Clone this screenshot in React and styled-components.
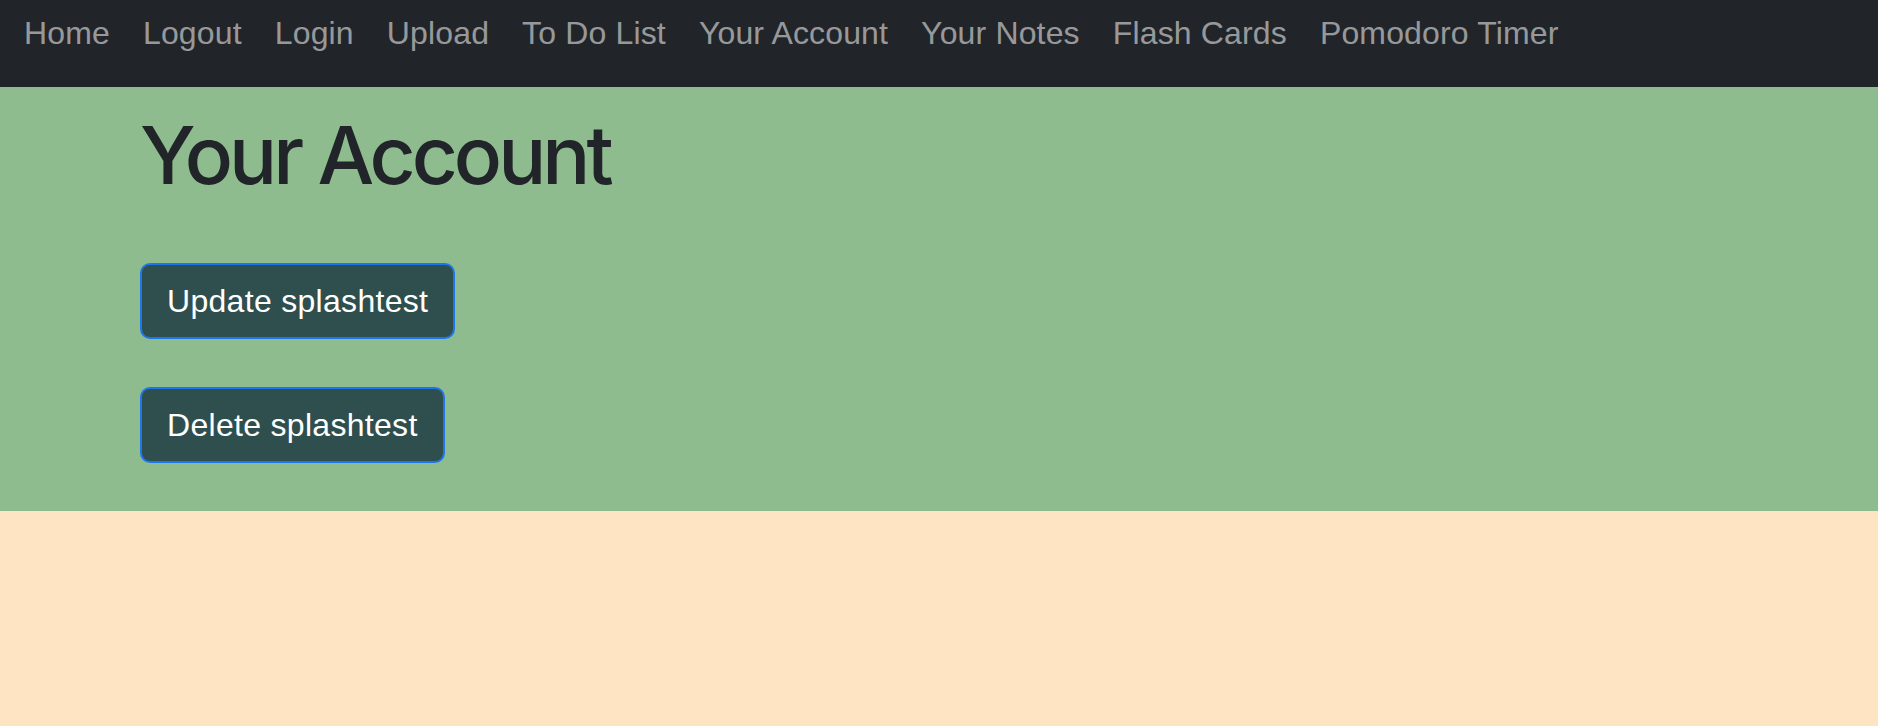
import React from "react";
import styled, { createGlobalStyle } from "styled-components";

const GlobalStyle = createGlobalStyle`
  html, body {
    margin: 0;
    padding: 0;
    background: bisque;
    font-family: "Liberation Sans", Arial, sans-serif;
  }
  * {
    box-sizing: border-box;
  }
`;

const NavBar = styled.nav`
  background: #212529;
  height: 87px;
  display: flex;
  align-items: flex-start;
  padding: 0 0 0 7.5px;
`;

const NavList = styled.ul`
  display: flex;
  list-style: none;
  margin: 0;
  padding: 0;
`;

const NavLink = styled.a`
  display: block;
  padding: 9px 16.5px;
  font-size: 32px;
  line-height: 48px;
  letter-spacing: 0.15px;
  color: rgba(255, 255, 255, 0.55);
  text-decoration: none;
  cursor: pointer;
`;

const Section = styled.section`
  background: darkseagreen;
  padding: 20px 0 48px 140px;
  display: flex;
  flex-direction: column;
  align-items: flex-start;
`;

const Title = styled.h1`
  margin: 0 0 60px;
  font-family: Inter, "Liberation Sans", sans-serif;
  font-size: 80px;
  font-weight: 500;
  line-height: 96px;
  color: #212529;
  letter-spacing: -4px;
`;

const ActionButton = styled.button`
  height: 76px;
  padding: 0 25px;
  margin-top: ${(p) => (p.$first ? "0" : "48px")};
  background: darkslategray;
  color: #fff;
  border: 2px solid #1e76ee;
  border-radius: 10px;
  font-family: inherit;
  font-size: 32px;
  line-height: 48px;
  letter-spacing: 0.3px;
  cursor: pointer;
`;

const links = [
  "Home",
  "Logout",
  "Login",
  "Upload",
  "To Do List",
  "Your Account",
  "Your Notes",
  "Flash Cards",
  "Pomodoro Timer",
];

export default function App() {
  return (
    <>
      <GlobalStyle />
      <NavBar>
        <NavList>
          {links.map((l) => (
            <li key={l}>
              <NavLink>{l}</NavLink>
            </li>
          ))}
        </NavList>
      </NavBar>
      <Section>
        <Title>Your Account</Title>
        <ActionButton $first>Update splashtest</ActionButton>
        <ActionButton>Delete splashtest</ActionButton>
      </Section>
    </>
  );
}
